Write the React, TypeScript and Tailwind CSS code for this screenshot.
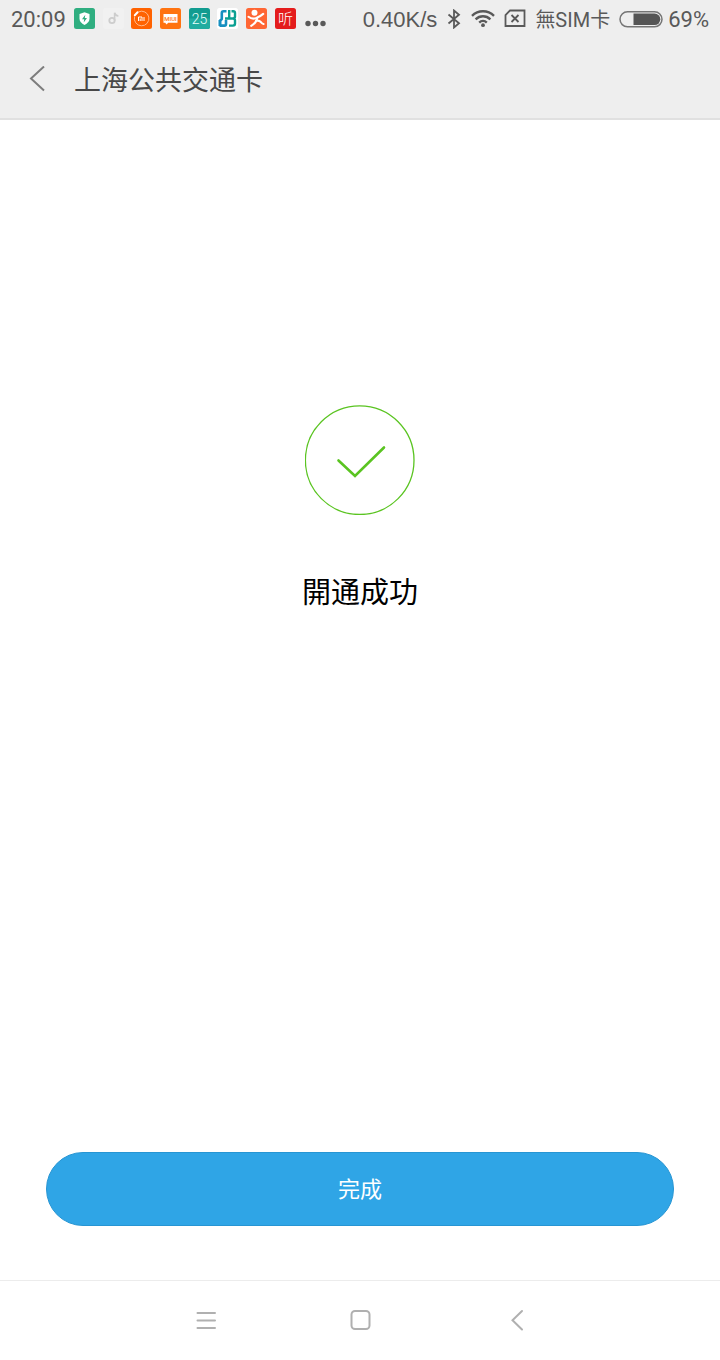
import type { ReactNode } from "react";

const CJK = "font-['Noto_Sans_CJK_SC',sans-serif]";

function AppIcon({ bg, children }: { bg: string; children: ReactNode }) {
  return (
    <svg viewBox="0 0 21 21" className="size-[21px]" aria-hidden="true">
      <rect width="21" height="21" rx="2.5" fill={bg} />
      {children}
    </svg>
  );
}

function NotificationIcons() {
  return (
    <div className="flex w-[222px] justify-between">
      <AppIcon bg="#2fae80">
        <path d="M10.5 4.2 15.5 6v4.8c0 2.7-2 4.8-5 6.2-3-1.4-5-3.5-5-6.2V6z" fill="#fff" />
        <path d="M11.3 6.8 8 11.2h2.2L9.7 14.6 13 10h-2.2z" fill="#2fae80" />
      </AppIcon>
      <AppIcon bg="#f1f1f1">
        <circle cx="9" cy="12.5" r="2.7" fill="none" stroke="#cdcdcd" strokeWidth="1.8" />
        <path d="M11.6 12.8V4.8c.5 1.8 1.6 3 3.8 3.2" fill="none" stroke="#cdcdcd" strokeWidth="1.6" />
      </AppIcon>
      <AppIcon bg="#ff6200">
        <path d="M7.5 3.9A7.3 7.3 0 1 1 3.6 8.5" fill="none" stroke="#ffb98a" strokeWidth="1" />
        <path d="M3.8 7.2 6.6 4.3" stroke="#fff" strokeWidth="2" strokeLinecap="round" />
        <path d="M7.5 13V9h3.5v4M9.2 10.5V13M13 9v4" fill="none" stroke="#fff" strokeWidth="1" />
      </AppIcon>
      <AppIcon bg="#ff7310">
        <path d="M3.5 6h14v8.800H8.2L6.6 16.4 5.2 14.8H3.5z" fill="#fff" />
        <text x="10.5" y="12.8" textAnchor="middle" fontSize="6" fontWeight="500" fill="#ff7310" className="font-[Roboto,sans-serif]">
          MIUI
        </text>
      </AppIcon>
      <AppIcon bg="#129c90">
        <path d="M0 10.5h21v8a2.5 2.5 0 0 1-2.5 2.5h-16A2.5 2.5 0 0 1 0 18.5z" fill="#22aca0" />
        <text x="10.5" y="15.5" textAnchor="middle" fontSize="14" fontWeight="300" fill="#e8fffb" className="font-[Roboto,sans-serif]">
          25
        </text>
      </AppIcon>
      <AppIcon bg="#fff">
        <path d="M9.5 3.2H6.5Q4.8 3.2 4.8 5v5.500Q4.800 12 2.500 12.500M2.500 17.600h5Q9 17.600 9 16v-4" fill="none" stroke="#168fc0" strokeWidth="2.600" />
        <path d="M3 12v6" stroke="#168fc0" strokeWidth="3" />
        <path d="M12.200 2v8M8 10.500h9M14.500 3.200h1.700q1.800 0 1.800 1.800v3.500q0 2-2 2 2 0 2 2v3.100q0 2-2 2h-4" fill="none" stroke="#0aa092" strokeWidth="2.400" />
      </AppIcon>
      <AppIcon bg="#ff6634">
        <circle cx="8.5" cy="4.7" r="3" fill="#fff" />
        <path d="M2.5 8.800c2.500 2 4.800 2.300 7.400 1.400 3-1 5-2.300 7.300-4.300" fill="none" stroke="#fff" strokeWidth="2.100" strokeLinecap="round" />
        <path d="M11.200 9.800c-.4 3.200-2.700 6.200-6 8M10 12.800c2.300-.5 3.700 0 4.800 1.200.8.900 1.300 1.700 2.700 2" fill="none" stroke="#fff" strokeWidth="2.100" strokeLinecap="round" />
      </AppIcon>
      <AppIcon bg="#e41c1c">
        <text x="10.5" y="16" textAnchor="middle" fontSize="15" fontWeight="300" fill="#fff" className="font-['Noto_Sans_CJK_SC',sans-serif]">
          听
        </text>
      </AppIcon>
    </div>
  );
}

function StatusBar() {
  return (
    <div className="flex h-10 items-center justify-between px-[11px] font-[Roboto,'Noto_Sans_CJK_TC',sans-serif] text-[22px] leading-10 text-[#595959]">
      <div className="flex items-center gap-2">
        <span>20:09</span>
        <div className="flex items-center gap-[9px] pb-[3px]">
          <NotificationIcons />
          <svg viewBox="0 0 21 21" className="size-[21px]" fill="#595959" aria-hidden="true">
            <circle cx="3" cy="15.5" r="2.7" />
            <circle cx="10.5" cy="15.5" r="2.7" />
            <circle cx="18" cy="15.5" r="2.7" />
          </svg>
        </div>
      </div>
      <div className="flex items-center gap-[9px]">
        <span className="font-['Liberation_Sans',sans-serif]">0.40K/s</span>
        <div className="flex items-center gap-[9px] pb-[3px]">
          <svg viewBox="0 0 16 20" className="h-5 w-4" fill="none" stroke="#595959" strokeWidth="1.8" aria-label="Bluetooth">
            <path d="m2.5 5.5 10.5 8.7-5 4.3V1.5l5 4.3L2.5 14.5" />
          </svg>
          <svg viewBox="0 0 24 20" className="h-5 w-6" fill="none" stroke="#595959" strokeWidth="2.4" aria-label="Wi-Fi">
            <path d="M1 6.8c6.2-6 15.800-6 22 0M4.600 10.300c4.200-4.100 10.600-4.100 14.800 0M8.200 13.600c2.200-2.100 5.400-2.100 7.600 0" />
            <circle cx="12" cy="16.2" r="1.9" fill="#595959" stroke="none" />
          </svg>
          <svg viewBox="0 0 22 20" className="h-5 w-[22px]" fill="none" stroke="#595959" strokeWidth="1.8" aria-hidden="true">
            <path d="M6 1.500h14.500V17h-19V6zM7.500 6l7 7M14.500 6l-7 7" />
          </svg>
        </div>
        <span className="text-xl leading-10">無SIM卡</span>
        <div className="flex items-center gap-[5px]">
          <svg viewBox="0 0 44 18" className="h-[18px] w-11" aria-label="Battery">
            <rect x="1" y="0.8" width="42" height="15" rx="7.5" fill="none" stroke="#757575" strokeWidth="1.5" />
            <path d="M14.500 2.500h21a5.800 5.800 0 0 1 0 11.600h-21z" fill="#555" />
          </svg>
          <span>69%</span>
        </div>
      </div>
    </div>
  );
}

export default function App() {
  return (
    <div className={`flex min-h-screen flex-col bg-white ${CJK}`}>
      <header className="border-b-2 border-[#e0e0e0] bg-[#eee]">
        <StatusBar />
        <div className="flex h-[78px] items-center gap-7 pl-7">
          <button type="button" aria-label="返回">
            <svg viewBox="0 0 18 26" className="h-[26px] w-[18px]" fill="none" stroke="#7d7d7d" strokeWidth="2">
              <path d="M16 0.5 3 12.5l13 12" />
            </svg>
          </button>
          <h1 className="text-[27px] leading-10 text-[#484848]">上海公共交通卡</h1>
        </div>
      </header>

      <main className="flex flex-1 flex-col items-center px-[46px] pt-[285px] pb-[54px]">
        <svg viewBox="0 0 110 110" className="size-[110px]" fill="none" stroke="#5ac421" aria-hidden="true">
          <circle cx="54.7" cy="55.2" r="54.3" strokeWidth="1.3" />
          <path d="m33.5 55.5 16.500 15.500L79 42.500" strokeWidth="2.6" strokeLinecap="round" />
        </svg>
        <p className="mt-[55px] text-[29px] leading-10 text-black">開通成功</p>
        <button
          type="button"
          className="mt-auto h-[74px] w-full rounded-full border border-[#2795d3] bg-[#2fa5e6] pb-1 text-[22px] text-white"
        >
          完成
        </button>
      </main>

      <nav className="flex h-20 items-center justify-center gap-[131px] border-t border-[#ececec] text-[#b0b0b0]">
        <button type="button" aria-label="選單">
          <svg viewBox="0 0 24 24" className="size-6" fill="none" stroke="currentColor" strokeWidth="2" strokeLinecap="round">
            <path d="M4.5 4h17.500M4.500 11.500h17.500M4.500 19h17.500" />
          </svg>
        </button>
        <button type="button" aria-label="主畫面">
          <svg viewBox="0 0 24 24" className="size-6" fill="none" stroke="currentColor" strokeWidth="2">
            <rect x="3.5" y="2" width="18" height="18" rx="3.5" />
          </svg>
        </button>
        <button type="button" aria-label="返回">
          <svg viewBox="0 0 24 24" className="size-6" fill="none" stroke="currentColor" strokeWidth="2" strokeLinecap="round">
            <path d="M19 2 9.5 11.2 19 20.5" />
          </svg>
        </button>
      </nav>
    </div>
  );
}
